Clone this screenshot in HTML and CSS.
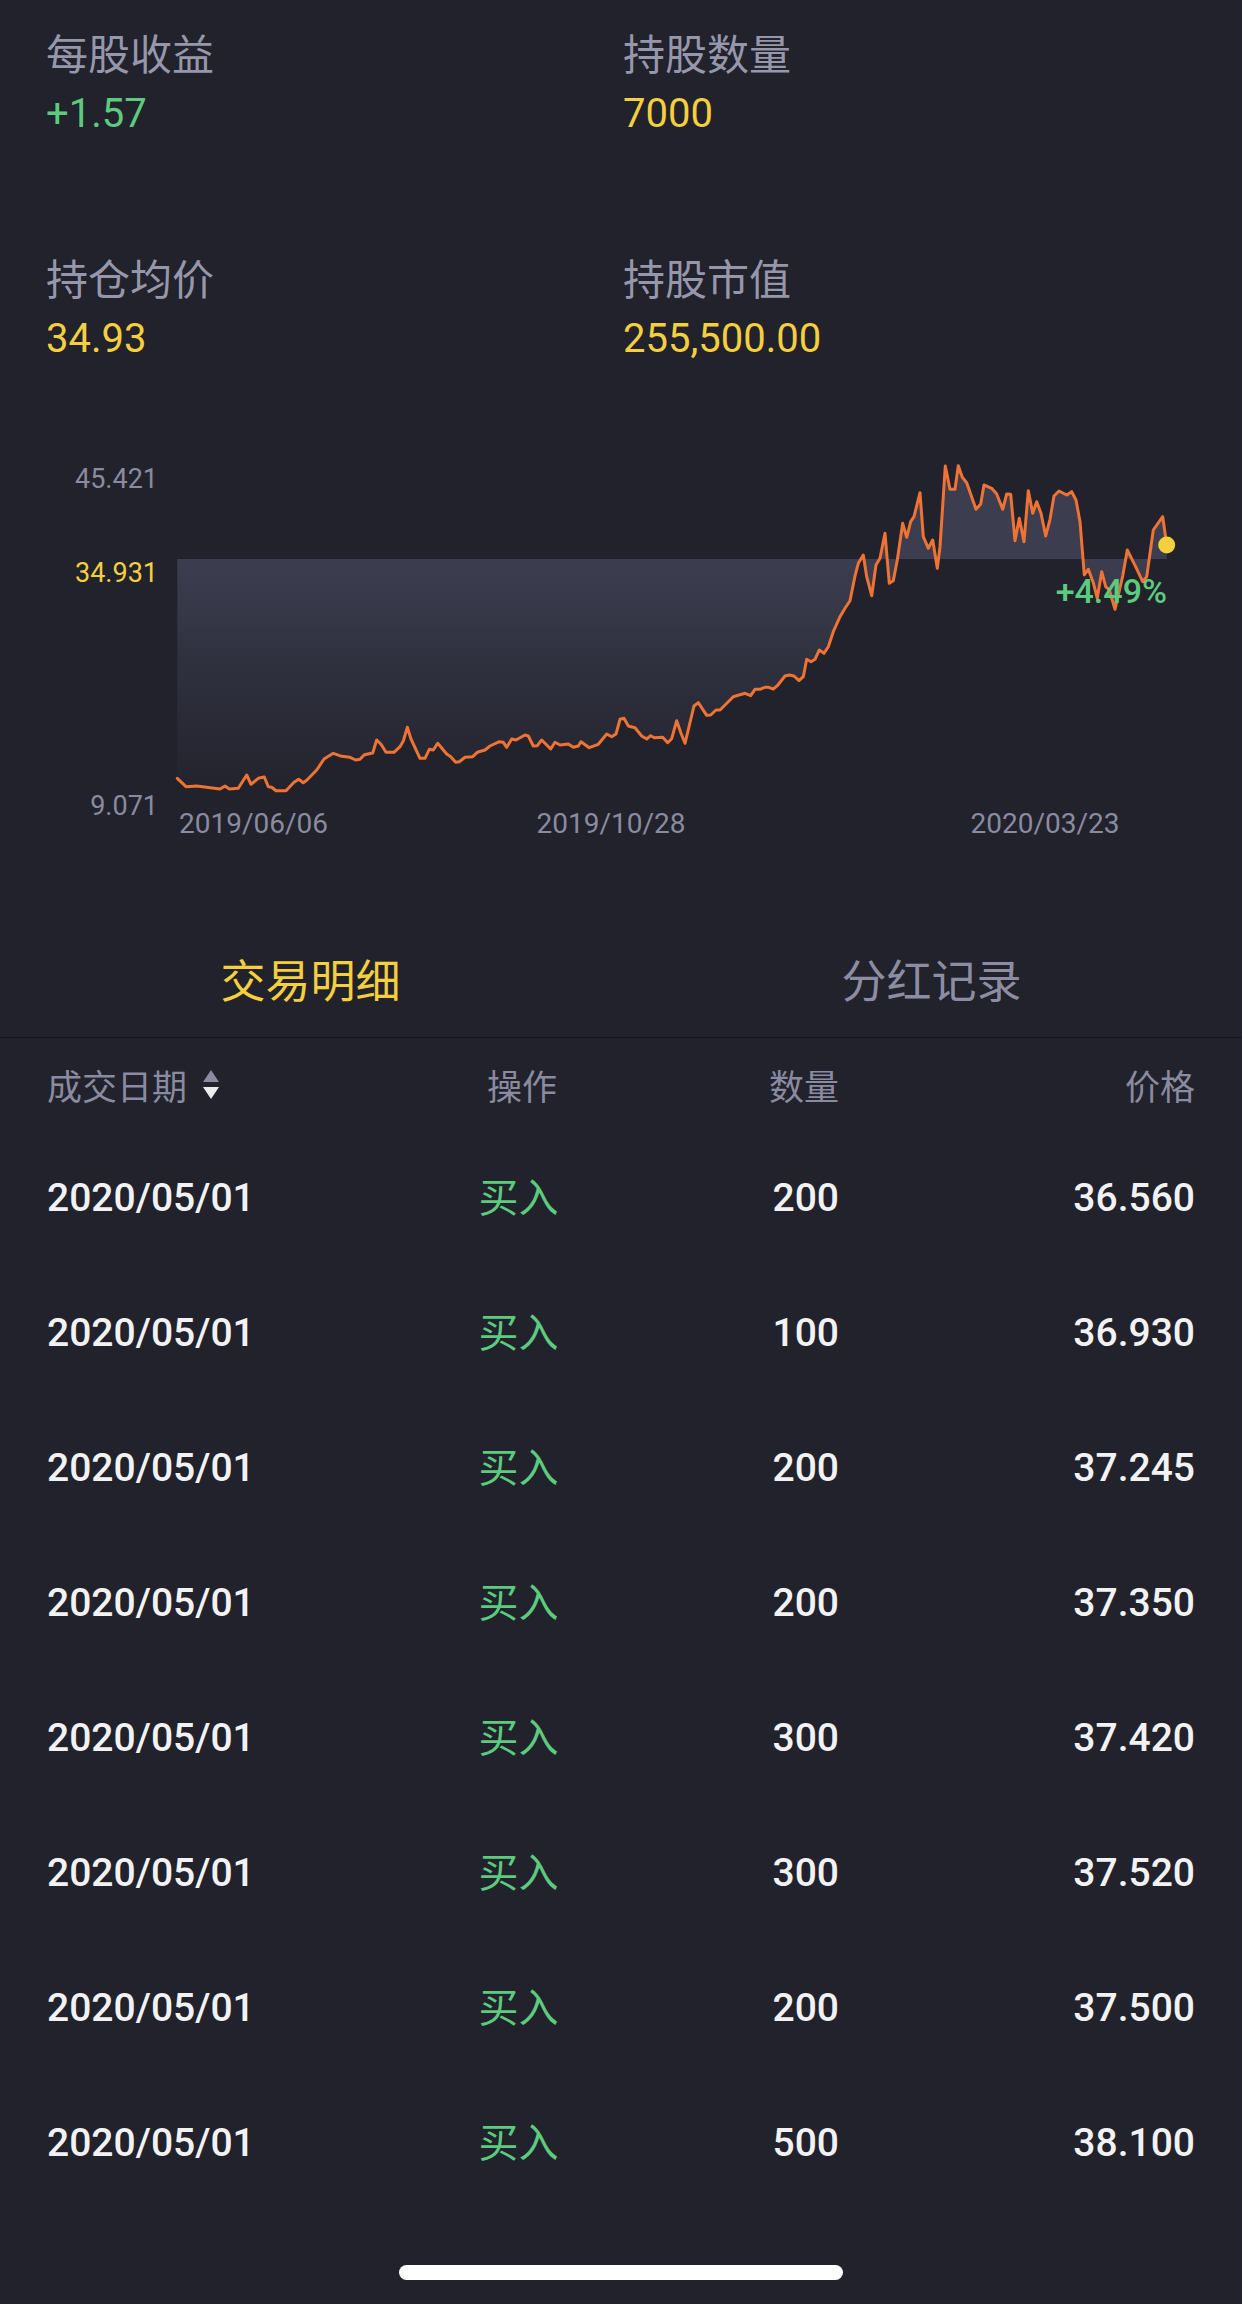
FILE: index.html
```html
<!DOCTYPE html>
<html lang="zh-CN">
<head>
<meta charset="utf-8">
<title>持仓详情</title>
<link rel="stylesheet" href="styles.css">
</head>
<body>
<main class="page">
  <section class="stats">
    <div class="stat">
      <div class="stat-label">每股收益</div>
      <div class="stat-value green">+1.57</div>
    </div>
    <div class="stat">
      <div class="stat-label">持股数量</div>
      <div class="stat-value yellow">7000</div>
    </div>
    <div class="stat">
      <div class="stat-label">持仓均价</div>
      <div class="stat-value yellow">34.93</div>
    </div>
    <div class="stat">
      <div class="stat-label">持股市值</div>
      <div class="stat-value yellow">255,500.00</div>
    </div>
  </section>

  <svg class="chart" viewBox="0 440 1242 477" xmlns="http://www.w3.org/2000/svg">
    <defs>
      <linearGradient id="area" gradientUnits="userSpaceOnUse" x1="0" y1="559" x2="0" y2="792">
        <stop offset="0" stop-color="#3c3e50"/>
        <stop offset="0.55" stop-color="#2d2e3b"/>
        <stop offset="1" stop-color="#22232c"/>
      </linearGradient>
    </defs>
    <path class="chart-area" d="M177.3,559 L177.3,778.3 186,786.7 196.7,786 220,789 225,786 229.3,789 238.3,788.3 246.7,775 251,784.3 258.3,778.3 264.3,777 268.3,786.7 271.7,787.3 276,790.7 286,790.7 294,782.3 298.7,779.3 303.3,782.7 306.7,780.3 316.7,770 324,759 333.3,753.3 341.7,756.3 350,757.3 355.7,760 360,759.3 364.3,754.7 372.7,753 376.7,740 381,744.3 386,752.3 394,752.3 400,746.7 403.3,741 407.3,727.3 411,739 420,758.3 425,758.3 429.3,749.3 433.3,750 437.7,743.3 446.7,754 450.7,756.7 455.7,762.3 459.3,761.7 465,757.3 472.7,756.7 477.3,752.3 485,750 490,746 499.3,741.7 503.3,742.3 506.7,747.3 511.7,739 516,740 525,735 528.3,736 533.3,746 537.3,745.7 541.7,740 550.7,749 555,742.3 560,745 568.3,744 573.3,747.3 578.3,746 581,741.7 589.3,747.7 598.3,744.3 606.7,734 611.7,736.7 616,734 620,719.3 624,718.3 628.3,726 635,727.7 641.7,736 646.7,739 650.7,735.7 654.3,737.7 662.7,737.3 667.7,742.7 671.7,738.7 676.7,720.7 681,733.3 685,743.3 694,706 698.3,702.7 706.7,715.3 710.7,715 716,710 720,710 733.3,696.7 745,693.3 750.7,695.7 755,689.3 760,689.3 765,687.3 768.7,687.3 773.3,689 777.3,685.7 785,676 789.3,675 794,676 799,680.7 803.3,676.7 806.7,659.3 811,661.7 815,659.3 819.3,650 824,653.3 828.3,646.7 833.3,631.7 840,616.7 845,608.3 850,600.7 855,576 858.3,563.3 863.3,555 866.7,576.7 871.7,595.7 876,565 880,558.3 885,533.3 889.3,583.3 893.3,580.7 897.3,560 902.7,523.3 906.7,537.3 910.7,521.7 914,516.7 920,492.7 923.3,536.7 928.3,548.3 932.7,540 937.3,568.3 940,546.7 945.3,466 950,489.3 955,489.3 958.3,465.7 962.3,477.3 966.7,482.7 976,509.3 980.7,504 984,485 991.7,488.3 996.7,494 1002.7,509.3 1006.7,494 1010.7,494.3 1015,540.7 1019.3,518.3 1024,541.7 1028.3,490.7 1032.7,513.3 1036.7,501.7 1041,513.3 1045.7,536 1050,519.3 1054,496 1059,491 1066.7,495 1071.7,491.7 1076,500 1080,521.7 1084.3,575 1088.3,569.3 1093.3,582.7 1097.3,598.3 1101.7,571.7 1105.7,586.7 1109.3,590 1115,609.3 1122.7,576 1127.3,550 1136,567.3 1142.7,581.7 1146.7,576.7 1153.3,530 1162.7,516.7 1166.7,545 L1166.7,559 Z"/>
    <polyline class="chart-line" points="177.3,778.3 186,786.7 196.7,786 220,789 225,786 229.3,789 238.3,788.3 246.7,775 251,784.3 258.3,778.3 264.3,777 268.3,786.7 271.7,787.3 276,790.7 286,790.7 294,782.3 298.7,779.3 303.3,782.7 306.7,780.3 316.7,770 324,759 333.3,753.3 341.7,756.3 350,757.3 355.7,760 360,759.3 364.3,754.7 372.7,753 376.7,740 381,744.3 386,752.3 394,752.3 400,746.7 403.3,741 407.3,727.3 411,739 420,758.3 425,758.3 429.3,749.3 433.3,750 437.7,743.3 446.7,754 450.7,756.7 455.7,762.3 459.3,761.7 465,757.3 472.7,756.7 477.3,752.3 485,750 490,746 499.3,741.7 503.3,742.3 506.7,747.3 511.7,739 516,740 525,735 528.3,736 533.3,746 537.3,745.7 541.7,740 550.7,749 555,742.3 560,745 568.3,744 573.3,747.3 578.3,746 581,741.7 589.3,747.7 598.3,744.3 606.7,734 611.7,736.7 616,734 620,719.3 624,718.3 628.3,726 635,727.7 641.7,736 646.7,739 650.7,735.7 654.3,737.7 662.7,737.3 667.7,742.7 671.7,738.7 676.7,720.7 681,733.3 685,743.3 694,706 698.3,702.7 706.7,715.3 710.7,715 716,710 720,710 733.3,696.7 745,693.3 750.7,695.7 755,689.3 760,689.3 765,687.3 768.7,687.3 773.3,689 777.3,685.7 785,676 789.3,675 794,676 799,680.7 803.3,676.7 806.7,659.3 811,661.7 815,659.3 819.3,650 824,653.3 828.3,646.7 833.3,631.7 840,616.7 845,608.3 850,600.7 855,576 858.3,563.3 863.3,555 866.7,576.7 871.7,595.7 876,565 880,558.3 885,533.3 889.3,583.3 893.3,580.7 897.3,560 902.7,523.3 906.7,537.3 910.7,521.7 914,516.7 920,492.7 923.3,536.7 928.3,548.3 932.7,540 937.3,568.3 940,546.7 945.3,466 950,489.3 955,489.3 958.3,465.7 962.3,477.3 966.7,482.7 976,509.3 980.7,504 984,485 991.7,488.3 996.7,494 1002.7,509.3 1006.7,494 1010.7,494.3 1015,540.7 1019.3,518.3 1024,541.7 1028.3,490.7 1032.7,513.3 1036.7,501.7 1041,513.3 1045.7,536 1050,519.3 1054,496 1059,491 1066.7,495 1071.7,491.7 1076,500 1080,521.7 1084.3,575 1088.3,569.3 1093.3,582.7 1097.3,598.3 1101.7,571.7 1105.7,586.7 1109.3,590 1115,609.3 1122.7,576 1127.3,550 1136,567.3 1142.7,581.7 1146.7,576.7 1153.3,530 1162.7,516.7 1166.7,545"/>
    <circle class="chart-dot" cx="1166.7" cy="545" r="8.5"/>
    <text class="axis-y" x="158" y="488">45.421</text>
    <text class="axis-y axis-avg" x="158" y="582">34.931</text>
    <text class="axis-y" x="158" y="815">9.071</text>
    <text class="axis-x" x="179" y="833">2019/06/06</text>
    <text class="axis-x axis-mid" x="611" y="833">2019/10/28</text>
    <text class="axis-x axis-mid" x="1045" y="833">2020/03/23</text>
    <text class="chart-pct" x="1167" y="603">+4.49%</text>
  </svg>

  <nav class="tabs">
    <div class="tab tab-active">交易明细</div>
    <div class="tab">分红记录</div>
  </nav>

  <section class="table">
    <div class="thead">
      <div class="th col-date">成交日期
        <span class="sort">
          <span class="sort-up"></span>
          <span class="sort-down"></span>
        </span>
      </div>
      <div class="th col-op">操作</div>
      <div class="th col-num">数量</div>
      <div class="th col-price">价格</div>
    </div>
    <div class="tr"><div class="col-date">2020/05/01</div><div class="col-op buy">买入</div><div class="col-num">200</div><div class="col-price">36.560</div></div>
    <div class="tr"><div class="col-date">2020/05/01</div><div class="col-op buy">买入</div><div class="col-num">100</div><div class="col-price">36.930</div></div>
    <div class="tr"><div class="col-date">2020/05/01</div><div class="col-op buy">买入</div><div class="col-num">200</div><div class="col-price">37.245</div></div>
    <div class="tr"><div class="col-date">2020/05/01</div><div class="col-op buy">买入</div><div class="col-num">200</div><div class="col-price">37.350</div></div>
    <div class="tr"><div class="col-date">2020/05/01</div><div class="col-op buy">买入</div><div class="col-num">300</div><div class="col-price">37.420</div></div>
    <div class="tr"><div class="col-date">2020/05/01</div><div class="col-op buy">买入</div><div class="col-num">300</div><div class="col-price">37.520</div></div>
    <div class="tr"><div class="col-date">2020/05/01</div><div class="col-op buy">买入</div><div class="col-num">200</div><div class="col-price">37.500</div></div>
    <div class="tr"><div class="col-date">2020/05/01</div><div class="col-op buy">买入</div><div class="col-num">500</div><div class="col-price">38.100</div></div>
  </section>

  <div class="home-indicator"></div>
</main>
</body>
</html>
```

FILE: styles.css
```css
* {
  box-sizing: border-box;
}

html, body {
  margin: 0;
  padding: 0;
  background: #21222b;
}

.page {
  width: 1242px;
  height: 2304px;
  overflow: hidden;
  background: #21222b;
  font-family: Roboto, "Noto Sans CJK SC", sans-serif;
  color: #f2f2f4;
}

/* ---------- stats ---------- */
.stats {
  display: grid;
  grid-template-columns: 577px 1fr;
  row-gap: 113px;
  padding: 27px 0 0 46px;
}

.stat {
  display: flex;
  flex-direction: column;
  gap: 12px;
}

.stat-label {
  font-family: "Noto Sans CJK SC", sans-serif;
  font-size: 42px;
  line-height: 50px;
  height: 50px;
  color: #9797ac;
}

.stat-value {
  font-family: Roboto, sans-serif;
  font-size: 40px;
  line-height: 50px;
  height: 50px;
}

.green { color: #5ccb7f; }
.yellow { color: #f4cf3e; }

/* ---------- chart ---------- */
.chart {
  display: block;
  margin-top: 76px;
  width: 1242px;
  height: 477px;
}

.chart-area {
  fill: url(#area);
  fill-rule: evenodd;
}

.chart-line {
  fill: none;
  stroke: #ee7335;
  stroke-width: 3;
  stroke-linejoin: round;
  stroke-linecap: round;
}

.chart-dot {
  fill: #f4cf3e;
}

.axis-y {
  font-family: Roboto, sans-serif;
  font-size: 27px;
  fill: #8a8ba0;
  text-anchor: end;
}

.axis-avg {
  fill: #f4cf3e;
}

.axis-x {
  font-family: Roboto, sans-serif;
  font-size: 28px;
  fill: #8a8ba0;
}

.axis-mid {
  text-anchor: middle;
}

.chart-pct {
  font-family: Roboto, sans-serif;
  font-size: 34px;
  font-weight: 500;
  fill: #5ccb7f;
  text-anchor: end;
}

/* ---------- tabs ---------- */
.tabs {
  display: flex;
  height: 121px;
  border-bottom: 1px solid #15161b;
}

.tab {
  flex: 1;
  display: flex;
  align-items: center;
  justify-content: center;
  font-family: "Noto Sans CJK SC", sans-serif;
  font-size: 45px;
  color: #8c8da3;
  padding-top: 2px;
}

.tab-active {
  color: #f4cf3e;
}

/* ---------- table ---------- */
.table {
  padding: 0 47px;
}

.thead,
.tr {
  display: grid;
  grid-template-columns: 380px 190px 222px 1fr;
  align-items: center;
}

.thead {
  height: 92px;
}

.tr {
  height: 135px;
  font-family: Roboto, sans-serif;
  font-size: 39px;
  font-weight: 500;
  color: #f2f2f4;
}

.th {
  font-family: "Noto Sans CJK SC", sans-serif;
  font-size: 35px;
  color: #8a8ba0;
}

.col-date {
  display: flex;
  align-items: center;
}

.col-op {
  text-align: center;
}

.col-num,
.col-price {
  text-align: right;
}

.buy {
  font-family: "Noto Sans CJK SC", sans-serif;
  font-size: 40px;
  line-height: 44px;
  font-weight: 400;
  color: #5ccb7f;
  padding-right: 7px;
  padding-bottom: 6px;
}

.sort {
  display: inline-flex;
  flex-direction: column;
  gap: 5px;
  margin-left: 16px;
}

.sort-up,
.sort-down {
  width: 0;
  height: 0;
  border-left: 8px solid transparent;
  border-right: 8px solid transparent;
}

.sort-up {
  border-bottom: 12px solid #8a8ba0;
}

.sort-down {
  border-top: 12px solid #ececf0;
}

/* ---------- home indicator ---------- */
.home-indicator {
  width: 444px;
  height: 15px;
  margin: 55px auto 0;
  border-radius: 8px;
  background: #ffffff;
}
```
